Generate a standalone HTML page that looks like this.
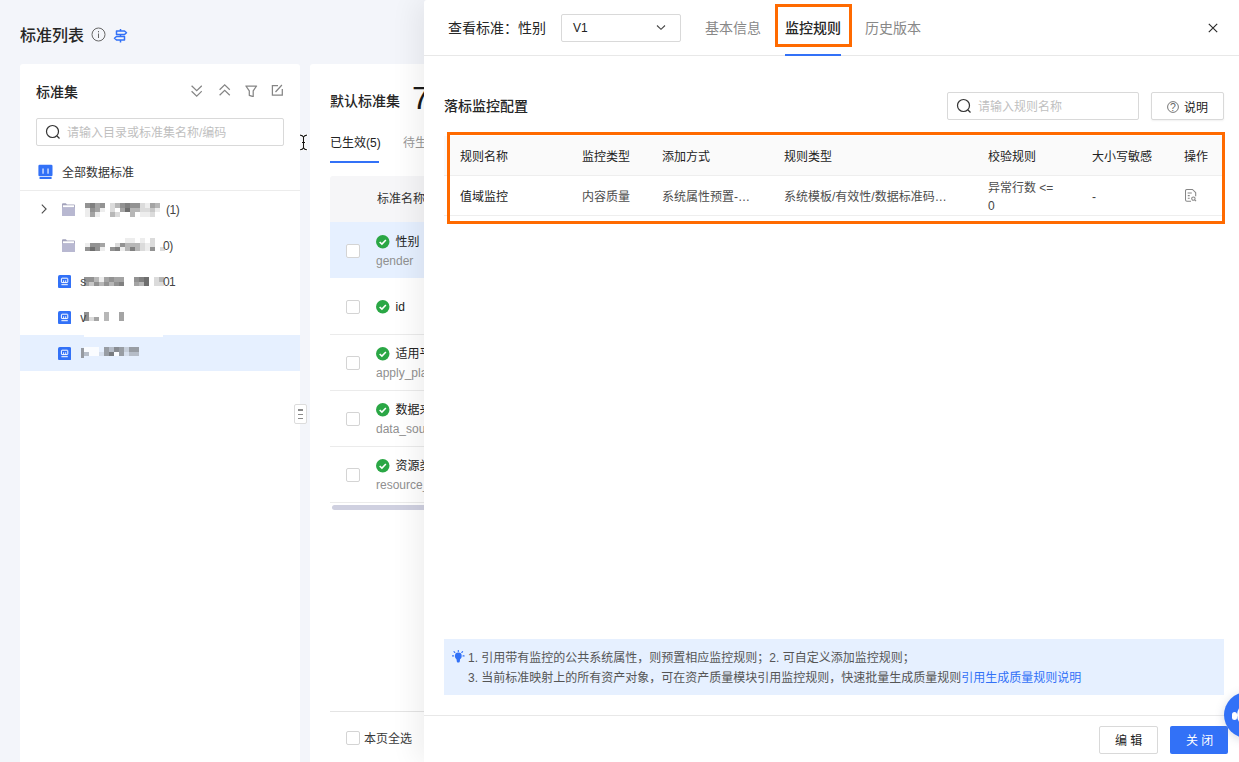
<!DOCTYPE html>
<html lang="zh-CN">
<head>
<meta charset="utf-8">
<title>标准列表</title>
<style>
*{box-sizing:border-box;margin:0;padding:0}
html,body{width:1239px;height:762px;overflow:hidden}
body{font-family:"Liberation Sans","Noto Sans CJK SC",sans-serif;font-size:12px;color:#333;background:#f3f5fa;position:relative}
.abs{position:absolute}
.t{position:absolute;white-space:nowrap;line-height:1}
/* left page */
#title{left:20px;top:27.500px;font-size:16px;font-weight:500;color:#262626}
#tree{left:20px;top:64px;width:280px;height:698px;background:#fff;border-radius:3px 3px 0 0}
#main{left:310px;top:64px;width:200px;height:698px;background:#fff;border-radius:3px 0 0 0}
.search{position:absolute;border:1px solid #d9d9d9;border-radius:2px;background:#fff}
.ph{color:#bfbfbf}
.sel{left:0;top:271px;width:280px;height:36px;background:#e6f0ff}
.blur{position:absolute;background:#9a9a9a;filter:blur(1.2px);opacity:.75}
.cb{position:absolute;width:14px;height:14px;border:1px solid #d4d4d4;border-radius:2px;background:#fff}
.ok{position:absolute;width:13.500px;height:13.500px}
.row-line{position:absolute;left:20px;right:0;height:1px;background:#ebebeb}
/* drawer */
#drawer{left:424px;top:0;width:815px;height:762px;background:#fff;box-shadow:-8px 0 28px rgba(0,0,0,.068);border-radius:3px 0 0 0}
.hl{position:absolute;border:3px solid #ff6a00}
</style>
</head>
<body>

<!-- ===== background page ===== -->
<div class="t" id="title">标准列表</div>
<svg class="abs" style="left:91.200px;top:27.200px" width="15" height="15" viewBox="0 0 15 15"><circle cx="7.500" cy="7.500" r="6.500" fill="none" stroke="#666" stroke-width="1"/><rect x="7" y="6.500" width="1" height="4.500" fill="#666"/><rect x="7" y="4" width="1" height="1.300" fill="#666"/></svg>
<svg class="abs" style="left:113px;top:28px" width="15" height="15" viewBox="0 0 15 15" fill="none" stroke="#3271f7" stroke-width="1.500" stroke-linejoin="round"><path d="M7.500 1v2M7.500 6.500v2M7.500 12v2.500"/><path d="M3.500 3h8l2 1.750-2 1.750h-8z"/><path d="M11.500 8.500h-8l-2 1.750 2 1.750h8z"/></svg>

<div class="abs" id="tree">
  <div class="t" style="left:16px;top:20.500px;font-size:14px;font-weight:500;color:#262626">标准集</div>
  <!-- toolbar icons -->
  <svg class="abs" style="left:170.500px;top:21px" width="11.400" height="12" viewBox="0 0 11.400 12" fill="none" stroke="#858585" stroke-width="1.250"><path d="M.6.800l5.100 4.900 5.100-4.900M.6 6.200l5.100 4.900 5.100-4.900"/></svg>
  <svg class="abs" style="left:199.300px;top:20.300px" width="11.400" height="12" viewBox="0 0 11.400 12" fill="none" stroke="#858585" stroke-width="1.250"><path d="M.6 5.800l5.100-4.900 5.100 4.900M.6 11.200l5.100-4.900 5.100 4.900"/></svg>
  <svg class="abs" style="left:225px;top:20.500px" width="12.500" height="12.500" viewBox="0 0 12.500 12.500" fill="none" stroke="#858585" stroke-width="1.250" stroke-linejoin="round"><path d="M.9 1h10.700l-3.400 4.800v5.900l-3.900-1.300v-4.600z"/></svg>
  <svg class="abs" style="left:251px;top:19.800px" width="12" height="12" viewBox="0 0 12 12" fill="none" stroke="#858585" stroke-width="1.250"><path d="M7 1.500h-5.600v9.600h9.900v-6M4.500 8l6.400-7"/></svg>

  <div class="search" style="left:16px;top:54px;width:248px;height:28px"></div>
  <svg class="abs" style="left:25px;top:60px" width="16" height="16" viewBox="0 0 16 16" fill="none" stroke="#333" stroke-width="1.200"><circle cx="7.500" cy="7.500" r="6"/><path d="M12 12l2.500 2.500"/></svg>
  <div class="t ph" style="left:47px;top:63px">请输入目录或标准集名称/编码</div>

  <!-- all standards -->
  <svg class="abs" style="left:17px;top:100px" width="16" height="16" viewBox="0 0 16 16"><rect x="1.400" y=".7" width="14.100" height="11.500" rx="1.300" fill="#3271f7"/><rect x="5.200" y="4.500" width="1.700" height="5.200" fill="#fff" opacity=".65"/><rect x="10.200" y="4.500" width="1.700" height="5.200" fill="#fff" opacity=".65"/><rect x="2.500" y="12.900" width="12.100" height="2" rx=".5" fill="#3271f7"/></svg>
  <div class="t" style="left:42px;top:103px;color:#333">全部数据标准</div>
  <div class="abs" style="left:0;top:126px;width:280px;height:1px;background:#ececec"></div>

  <!-- folder rows -->
  <svg class="abs" style="left:21px;top:140px" width="6" height="10" viewBox="0 0 6 10" fill="none" stroke="#4d4d4d" stroke-width="1.100"><path d="M.8.700l4.300 4.300-4.300 4.300"/></svg>
  <svg class="abs" style="left:42.300px;top:138.5px" width="13" height="13" viewBox="0 0 13 13"><path d="M0 1.200q0-1 1-1h2.800l1.200 1.300h7q1 0 1 1v9.500q0 1-1 1h-11q-1 0-1-1z" fill="#a3a3bc"/><rect x=".9" y="2.300" width="11.200" height="2.200" fill="#fff"/><rect x="0" y="4.300" width="13" height="8.700" rx="1" fill="#b8b8d1"/></svg>
  <!--m1--><svg class="abs" style="left:65px;top:139px" width="75.0" height="13.8" viewBox="0 0 75.0 13.8" shape-rendering="crispEdges"><rect x="0.0" y="0.0" width="5" height="4.6" fill="#4a4a4a" opacity="0.6"/><rect x="5.0" y="0.0" width="5" height="4.6" fill="#4a4a4a" opacity="0.7"/><rect x="10.0" y="0.0" width="5" height="4.6" fill="#4a4a4a" opacity="0.5"/><rect x="15.0" y="0.0" width="5" height="4.6" fill="#4a4a4a" opacity="0.6"/><rect x="25.0" y="0.0" width="5" height="4.6" fill="#4a4a4a" opacity="0.2"/><rect x="30.0" y="0.0" width="5" height="4.6" fill="#4a4a4a" opacity="0.4"/><rect x="35.0" y="0.0" width="5" height="4.6" fill="#4a4a4a" opacity="0.6"/><rect x="40.0" y="0.0" width="5" height="4.6" fill="#4a4a4a" opacity="0.7"/><rect x="45.0" y="0.0" width="5" height="4.6" fill="#4a4a4a" opacity="0.6"/><rect x="50.0" y="0.0" width="5" height="4.6" fill="#4a4a4a" opacity="0.6"/><rect x="55.0" y="0.0" width="5" height="4.6" fill="#4a4a4a" opacity="0.2"/><rect x="60.0" y="0.0" width="5" height="4.6" fill="#4a4a4a" opacity="0.1"/><rect x="65.0" y="0.0" width="5" height="4.6" fill="#4a4a4a" opacity="0.5"/><rect x="70.0" y="0.0" width="5" height="4.6" fill="#4a4a4a" opacity="0.4"/><rect x="0.0" y="4.6" width="5" height="4.6" fill="#4a4a4a" opacity="0.1"/><rect x="5.0" y="4.6" width="5" height="4.6" fill="#4a4a4a" opacity="0.6"/><rect x="10.0" y="4.6" width="5" height="4.6" fill="#4a4a4a" opacity="0.5"/><rect x="15.0" y="4.6" width="5" height="4.6" fill="#4a4a4a" opacity="0.1"/><rect x="25.0" y="4.6" width="5" height="4.6" fill="#4a4a4a" opacity="0.2"/><rect x="35.0" y="4.6" width="5" height="4.6" fill="#4a4a4a" opacity="0.5"/><rect x="40.0" y="4.6" width="5" height="4.6" fill="#4a4a4a" opacity="0.8"/><rect x="45.0" y="4.6" width="5" height="4.6" fill="#4a4a4a" opacity="0.4"/><rect x="50.0" y="4.6" width="5" height="4.6" fill="#4a4a4a" opacity="0.4"/><rect x="55.0" y="4.6" width="5" height="4.6" fill="#4a4a4a" opacity="0.2"/><rect x="60.0" y="4.6" width="5" height="4.6" fill="#4a4a4a" opacity="0.2"/><rect x="65.0" y="4.6" width="5" height="4.6" fill="#4a4a4a" opacity="0.3"/><rect x="70.0" y="4.6" width="5" height="4.6" fill="#4a4a4a" opacity="0.1"/><rect x="0.0" y="9.2" width="5" height="4.6" fill="#4a4a4a" opacity="0.1"/><rect x="5.0" y="9.2" width="5" height="4.6" fill="#4a4a4a" opacity="0.5"/><rect x="10.0" y="9.2" width="5" height="4.6" fill="#4a4a4a" opacity="0.1"/><rect x="25.0" y="9.2" width="5" height="4.6" fill="#4a4a4a" opacity="0.4"/><rect x="30.0" y="9.2" width="5" height="4.6" fill="#4a4a4a" opacity="0.2"/><rect x="45.0" y="9.2" width="5" height="4.6" fill="#4a4a4a" opacity="0.4"/><rect x="55.0" y="9.2" width="5" height="4.6" fill="#4a4a4a" opacity="0.1"/><rect x="60.0" y="9.2" width="5" height="4.6" fill="#4a4a4a" opacity="0.1"/><rect x="65.0" y="9.2" width="5" height="4.6" fill="#4a4a4a" opacity="0.2"/></svg>
  <div class="t" style="left:146px;top:139.500px;color:#444;letter-spacing:-.4px">(1)</div>

  <svg class="abs" style="left:42.300px;top:174.5px" width="13" height="13" viewBox="0 0 13 13"><path d="M0 1.200q0-1 1-1h2.800l1.200 1.300h7q1 0 1 1v9.500q0 1-1 1h-11q-1 0-1-1z" fill="#a3a3bc"/><rect x=".9" y="2.300" width="11.200" height="2.200" fill="#fff"/><rect x="0" y="4.300" width="13" height="8.700" rx="1" fill="#b8b8d1"/></svg>
  <!--m2--><svg class="abs" style="left:65px;top:173.5px" width="80.0" height="13.8" viewBox="0 0 80.0 13.8" shape-rendering="crispEdges"><rect x="40.0" y="0.0" width="5" height="4.6" fill="#4a4a4a" opacity="0.1"/><rect x="45.0" y="0.0" width="5" height="4.6" fill="#4a4a4a" opacity="0.1"/><rect x="55.0" y="0.0" width="5" height="4.6" fill="#4a4a4a" opacity="0.1"/><rect x="65.0" y="0.0" width="5" height="4.6" fill="#4a4a4a" opacity="0.2"/><rect x="0.0" y="4.6" width="5" height="4.6" fill="#4a4a4a" opacity="0.1"/><rect x="5.0" y="4.6" width="5" height="4.6" fill="#4a4a4a" opacity="0.6"/><rect x="10.0" y="4.6" width="5" height="4.6" fill="#4a4a4a" opacity="0.6"/><rect x="15.0" y="4.6" width="5" height="4.6" fill="#4a4a4a" opacity="0.5"/><rect x="30.0" y="4.6" width="5" height="4.6" fill="#4a4a4a" opacity="0.2"/><rect x="35.0" y="4.6" width="5" height="4.6" fill="#4a4a4a" opacity="0.6"/><rect x="40.0" y="4.6" width="5" height="4.6" fill="#4a4a4a" opacity="0.4"/><rect x="45.0" y="4.6" width="5" height="4.6" fill="#4a4a4a" opacity="0.4"/><rect x="50.0" y="4.6" width="5" height="4.6" fill="#4a4a4a" opacity="0.4"/><rect x="55.0" y="4.6" width="5" height="4.6" fill="#4a4a4a" opacity="0.2"/><rect x="60.0" y="4.6" width="5" height="4.6" fill="#4a4a4a" opacity="0.1"/><rect x="65.0" y="4.6" width="5" height="4.6" fill="#4a4a4a" opacity="0.2"/><rect x="0.0" y="9.2" width="5" height="4.6" fill="#4a4a4a" opacity="0.6"/><rect x="5.0" y="9.2" width="5" height="4.6" fill="#4a4a4a" opacity="0.8"/><rect x="10.0" y="9.2" width="5" height="4.6" fill="#4a4a4a" opacity="0.6"/><rect x="15.0" y="9.2" width="5" height="4.6" fill="#4a4a4a" opacity="0.1"/><rect x="25.0" y="9.2" width="5" height="4.6" fill="#4a4a4a" opacity="0.6"/><rect x="30.0" y="9.2" width="5" height="4.6" fill="#4a4a4a" opacity="0.7"/><rect x="35.0" y="9.2" width="5" height="4.6" fill="#4a4a4a" opacity="0.1"/><rect x="40.0" y="9.2" width="5" height="4.6" fill="#4a4a4a" opacity="0.4"/><rect x="45.0" y="9.2" width="5" height="4.6" fill="#4a4a4a" opacity="0.7"/><rect x="50.0" y="9.2" width="5" height="4.6" fill="#4a4a4a" opacity="0.4"/><rect x="55.0" y="9.2" width="5" height="4.6" fill="#4a4a4a" opacity="0.2"/><rect x="60.0" y="9.2" width="5" height="4.6" fill="#4a4a4a" opacity="0.1"/><rect x="65.0" y="9.2" width="5" height="4.6" fill="#4a4a4a" opacity="0.6"/><rect x="75.0" y="9.2" width="5" height="4.6" fill="#4a4a4a" opacity="0.2"/></svg>
  <div class="t" style="left:143px;top:175.500px;color:#444;letter-spacing:-.4px">0)</div>

  <!-- standard set rows -->
  <svg class="abs" style="left:38.100px;top:210.6px" width="13.2" height="13.4" viewBox="0 0 13.2 13.4"><rect width="13.2" height="13.4" rx="1.800" fill="#3271f7"/><rect x="3.400" y="3.200" width="6.400" height="4.400" rx=".6" fill="none" stroke="#fff" stroke-width="1"/><path d="M5.600 5.300v2.300M7.700 5.300v2.300" stroke="#fff" stroke-width=".9"/><rect x="3.400" y="9.200" width="6.400" height="1" fill="#fff"/></svg>
  <div class="t" style="left:60.300px;top:211.500px;color:#444">s</div>
  <!--m3--><svg class="abs" style="left:64.3px;top:213px" width="80.0" height="9.2" viewBox="0 0 80.0 9.2" shape-rendering="crispEdges"><rect x="0.0" y="0.0" width="5" height="4.6" fill="#4a4a4a" opacity="0.6"/><rect x="5.0" y="0.0" width="5" height="4.6" fill="#4a4a4a" opacity="0.6"/><rect x="10.0" y="0.0" width="5" height="4.6" fill="#4a4a4a" opacity="0.4"/><rect x="15.0" y="0.0" width="5" height="4.6" fill="#4a4a4a" opacity="0.1"/><rect x="20.0" y="0.0" width="5" height="4.6" fill="#4a4a4a" opacity="0.5"/><rect x="25.0" y="0.0" width="5" height="4.6" fill="#4a4a4a" opacity="0.6"/><rect x="30.0" y="0.0" width="5" height="4.6" fill="#4a4a4a" opacity="0.5"/><rect x="35.0" y="0.0" width="5" height="4.6" fill="#4a4a4a" opacity="0.5"/><rect x="50.0" y="0.0" width="5" height="4.6" fill="#4a4a4a" opacity="0.6"/><rect x="55.0" y="0.0" width="5" height="4.6" fill="#4a4a4a" opacity="0.7"/><rect x="60.0" y="0.0" width="5" height="4.6" fill="#4a4a4a" opacity="0.8"/><rect x="70.0" y="0.0" width="5" height="4.6" fill="#4a4a4a" opacity="0.2"/><rect x="75.0" y="0.0" width="5" height="4.6" fill="#4a4a4a" opacity="0.4"/><rect x="0.0" y="4.6" width="5" height="4.6" fill="#4a4a4a" opacity="0.5"/><rect x="5.0" y="4.6" width="5" height="4.6" fill="#4a4a4a" opacity="0.3"/><rect x="10.0" y="4.6" width="5" height="4.6" fill="#4a4a4a" opacity="0.6"/><rect x="15.0" y="4.6" width="5" height="4.6" fill="#4a4a4a" opacity="0.4"/><rect x="20.0" y="4.6" width="5" height="4.6" fill="#4a4a4a" opacity="0.6"/><rect x="25.0" y="4.6" width="5" height="4.6" fill="#4a4a4a" opacity="0.4"/><rect x="30.0" y="4.6" width="5" height="4.6" fill="#4a4a4a" opacity="0.6"/><rect x="35.0" y="4.6" width="5" height="4.6" fill="#4a4a4a" opacity="0.7"/><rect x="50.0" y="4.6" width="5" height="4.6" fill="#4a4a4a" opacity="0.5"/><rect x="55.0" y="4.6" width="5" height="4.6" fill="#4a4a4a" opacity="0.4"/><rect x="60.0" y="4.6" width="5" height="4.6" fill="#4a4a4a" opacity="0.8"/><rect x="70.0" y="4.6" width="5" height="4.6" fill="#4a4a4a" opacity="0.2"/><rect x="75.0" y="4.6" width="5" height="4.6" fill="#4a4a4a" opacity="0.2"/></svg>
  <div class="t" style="left:143px;top:211.500px;color:#444;letter-spacing:-.6px">01</div>

  <svg class="abs" style="left:38.100px;top:246.6px" width="13.2" height="13.4" viewBox="0 0 13.2 13.4"><rect width="13.2" height="13.4" rx="1.800" fill="#3271f7"/><rect x="3.400" y="3.200" width="6.400" height="4.400" rx=".6" fill="none" stroke="#fff" stroke-width="1"/><path d="M5.600 5.300v2.300M7.700 5.300v2.300" stroke="#fff" stroke-width=".9"/><rect x="3.400" y="9.200" width="6.400" height="1" fill="#fff"/></svg>
  <div class="t" style="left:60.300px;top:247.500px;color:#444">v</div>
  <!--m4--><svg class="abs" style="left:64.3px;top:248px" width="40.0" height="9.2" viewBox="0 0 40.0 9.2" shape-rendering="crispEdges"><rect x="0.0" y="0.0" width="5" height="4.6" fill="#4a4a4a" opacity="0.6"/><rect x="20.0" y="0.0" width="5" height="4.6" fill="#4a4a4a" opacity="0.4"/><rect x="35.0" y="0.0" width="5" height="4.6" fill="#4a4a4a" opacity="0.5"/><rect x="0.0" y="4.6" width="5" height="4.6" fill="#4a4a4a" opacity="0.6"/><rect x="5.0" y="4.6" width="5" height="4.6" fill="#4a4a4a" opacity="0.2"/><rect x="10.0" y="4.6" width="5" height="4.6" fill="#4a4a4a" opacity="0.5"/><rect x="20.0" y="4.6" width="5" height="4.6" fill="#4a4a4a" opacity="0.4"/><rect x="35.0" y="4.6" width="5" height="4.6" fill="#4a4a4a" opacity="0.5"/></svg>

  <div class="abs sel"></div>
  <div class="abs" style="left:64px;top:270px;width:79px;height:2.500px;background:#fff"></div>
  <div class="abs" style="left:60.500px;top:284px;width:3.500px;height:10px;background:#555;opacity:.55;filter:blur(.4px)"></div>
  <svg class="abs" style="left:38.100px;top:282.6px" width="13.2" height="13.4" viewBox="0 0 13.2 13.4"><rect width="13.2" height="13.4" rx="1.800" fill="#3271f7"/><rect x="3.400" y="3.200" width="6.400" height="4.400" rx=".6" fill="none" stroke="#fff" stroke-width="1"/><path d="M5.600 5.300v2.300M7.700 5.300v2.300" stroke="#fff" stroke-width=".9"/><rect x="3.400" y="9.200" width="6.400" height="1" fill="#fff"/></svg>
  <!--m5--><svg class="abs" style="left:64.3px;top:283px" width="55.0" height="9.2" viewBox="0 0 55.0 9.2" shape-rendering="crispEdges"><rect x="0.0" y="0.0" width="5" height="4.6" fill="#fff" opacity=".8"/><rect x="5.0" y="0.0" width="5" height="4.6" fill="#fff" opacity=".8"/><rect x="10.0" y="0.0" width="5" height="4.6" fill="#fff" opacity=".8"/><rect x="20.0" y="0.0" width="5" height="4.6" fill="#4a4a4a" opacity="0.5"/><rect x="25.0" y="0.0" width="5" height="4.6" fill="#4a4a4a" opacity="0.3"/><rect x="30.0" y="0.0" width="5" height="4.6" fill="#4a4a4a" opacity="0.6"/><rect x="35.0" y="0.0" width="5" height="4.6" fill="#4a4a4a" opacity="0.5"/><rect x="40.0" y="0.0" width="5" height="4.6" fill="#4a4a4a" opacity="0.2"/><rect x="45.0" y="0.0" width="5" height="4.6" fill="#4a4a4a" opacity="0.5"/><rect x="50.0" y="0.0" width="5" height="4.6" fill="#4a4a4a" opacity="0.5"/><rect x="0.0" y="4.6" width="5" height="4.6" fill="#4a4a4a" opacity="0.3"/><rect x="5.0" y="4.6" width="5" height="4.6" fill="#fff" opacity=".8"/><rect x="10.0" y="4.6" width="5" height="4.6" fill="#fff" opacity=".8"/><rect x="15.0" y="4.6" width="5" height="4.6" fill="#4a4a4a" opacity="0.1"/><rect x="20.0" y="4.6" width="5" height="4.6" fill="#4a4a4a" opacity="0.5"/><rect x="25.0" y="4.6" width="5" height="4.6" fill="#4a4a4a" opacity="0.7"/><rect x="30.0" y="4.6" width="5" height="4.6" fill="#fff" opacity=".8"/><rect x="35.0" y="4.6" width="5" height="4.6" fill="#4a4a4a" opacity="0.5"/><rect x="40.0" y="4.6" width="5" height="4.6" fill="#4a4a4a" opacity="0.1"/><rect x="45.0" y="4.6" width="5" height="4.6" fill="#4a4a4a" opacity="0.3"/><rect x="50.0" y="4.6" width="5" height="4.6" fill="#4a4a4a" opacity="0.3"/></svg>
</div>

<!-- splitter handle + cursor -->
<div class="abs" style="left:294px;top:404px;width:13px;height:20px;background:#fff;border:1px solid #dcdcdc;border-radius:2px"></div>
<div class="abs" style="left:297.500px;top:409.300px;width:5.500px;height:1.400px;background:#8a8a8a"></div>
<div class="abs" style="left:297.500px;top:413.500px;width:5.500px;height:1.400px;background:#8a8a8a"></div>
<div class="abs" style="left:297.500px;top:417.500px;width:5.500px;height:1.400px;background:#8a8a8a"></div>
<svg class="abs" style="left:299px;top:134px" width="9" height="18" viewBox="0 0 9 18" fill="none"><path d="M1.100 1.100q2.600.2 3.400 2 .8-1.800 3.400-2M4.500 3.100v10.600M1.100 15.700q2.600-.2 3.400-2 .8 1.800 3.400 2M3 8.500h3" stroke="#fff" stroke-width="2.800" stroke-linecap="round" opacity=".9"/><path d="M1.100 1.100q2.600.2 3.400 2 .8-1.800 3.400-2M4.500 3.100v10.600M1.100 15.700q2.600-.2 3.400-2 .8 1.800 3.400 2M3 8.500h3" stroke="#111" stroke-width="1.100"/></svg>

<div class="abs" id="main">
  <div class="t" style="left:20px;top:30px;font-size:14px;font-weight:500;color:#262626">默认标准集</div>
  <div class="t" style="left:102px;top:18px;font-size:32px;color:#1a1a1a">7</div>
  <div class="t" style="left:20px;top:73px;font-size:12px;color:#222">已生效(5)</div>
  <div class="t" style="left:93px;top:73px;font-size:12px;color:#999">待生效</div>
  <div class="abs" style="left:20px;top:97px;width:49px;height:2px;background:#3271f7"></div>
  <div class="abs" style="left:20px;top:112px;width:180px;height:46px;background:#f6f6f8;border-radius:3px 0 0 0"></div>
  <div class="t" style="left:67px;top:129px;color:#333">标准名称</div>
  <div class="abs" style="left:20px;top:158px;width:180px;height:56px;background:#e6f0ff"></div>

  <div class="cb" style="left:36px;top:179.5px"></div>
  <svg class="ok" style="left:66px;top:171px" viewBox="0 0 13 13"><circle cx="6.500" cy="6.500" r="6.500" fill="#2aa745"/><path d="M3.500 6.700l2.200 2.100 3.800-4" fill="none" stroke="#fff" stroke-width="1.500"/></svg>
  <div class="t" style="left:85.500px;top:172px;color:#222">性别</div>
  <div class="t" style="left:66px;top:191px;color:#909090">gender</div>

  <div class="cb" style="left:36px;top:235.5px"></div>
  <svg class="ok" style="left:66px;top:236px" viewBox="0 0 13 13"><circle cx="6.500" cy="6.500" r="6.500" fill="#2aa745"/><path d="M3.500 6.700l2.200 2.100 3.800-4" fill="none" stroke="#fff" stroke-width="1.500"/></svg>
  <div class="t" style="left:85.500px;top:237px;color:#222">id</div>
  <div class="row-line" style="top:270px"></div>

  <div class="cb" style="left:36px;top:291.5px"></div>
  <svg class="ok" style="left:66px;top:283px" viewBox="0 0 13 13"><circle cx="6.500" cy="6.500" r="6.500" fill="#2aa745"/><path d="M3.500 6.700l2.200 2.100 3.800-4" fill="none" stroke="#fff" stroke-width="1.500"/></svg>
  <div class="t" style="left:85.500px;top:284px;color:#222">适用平台</div>
  <div class="t" style="left:66px;top:303px;color:#909090">apply_platform</div>
  <div class="row-line" style="top:326px"></div>

  <div class="cb" style="left:36px;top:347.5px"></div>
  <svg class="ok" style="left:66px;top:339px" viewBox="0 0 13 13"><circle cx="6.500" cy="6.500" r="6.500" fill="#2aa745"/><path d="M3.500 6.700l2.200 2.100 3.800-4" fill="none" stroke="#fff" stroke-width="1.500"/></svg>
  <div class="t" style="left:85.500px;top:340px;color:#222">数据来源</div>
  <div class="t" style="left:66px;top:359px;color:#909090">data_source</div>
  <div class="row-line" style="top:382px"></div>

  <div class="cb" style="left:36px;top:403.5px"></div>
  <svg class="ok" style="left:66px;top:395px" viewBox="0 0 13 13"><circle cx="6.500" cy="6.500" r="6.500" fill="#2aa745"/><path d="M3.500 6.700l2.200 2.100 3.800-4" fill="none" stroke="#fff" stroke-width="1.500"/></svg>
  <div class="t" style="left:85.500px;top:396px;color:#222">资源类型</div>
  <div class="t" style="left:66px;top:415px;color:#909090">resource_type</div>
  <div class="row-line" style="top:438px"></div>
  <div class="abs" style="left:22px;top:441px;width:178px;height:5px;background:#cfd0e0;border-radius:3px"></div>

  <div class="abs" style="left:20px;top:647px;width:180px;height:1px;background:#e4e4e4"></div>
  <div class="cb" style="left:36px;top:667px"></div>
  <div class="t" style="left:54px;top:668.600px;color:#3a3a3a">本页全选</div>
</div>

<!-- ===== drawer ===== -->
<div class="abs" id="drawer">
  <div class="t" style="left:24px;top:21px;font-size:14px;color:#262626">查看标准：性别</div>
  <div class="search" style="left:137px;top:14px;width:120px;height:28px"></div>
  <div class="t" style="left:149px;top:22px;font-size:12px;color:#222">V1</div>
  <svg class="abs" style="left:232px;top:24px" width="10" height="7" viewBox="0 0 10 7" fill="none" stroke="#444" stroke-width="1.100"><path d="M1 1.500l4 3.800 4-3.800"/></svg>
  <div class="t" style="left:281px;top:21px;font-size:14px;color:#888">基本信息</div>
  <div class="t" style="left:361px;top:21px;font-size:14px;font-weight:500;color:#262626">监控规则</div>
  <div class="t" style="left:441px;top:21px;font-size:14px;color:#888">历史版本</div>
  <div class="abs" style="left:361px;top:54px;width:56px;height:2px;background:#3271f7;z-index:2"></div>
  <div class="hl" style="left:351px;top:4px;width:77px;height:43px"></div>
  <svg class="abs" style="left:784px;top:23px" width="10" height="10" viewBox="0 0 10 10" fill="none" stroke="#2a2a2a" stroke-width="1.150"><path d="M.8.800l8.400 8.400M9.200.800L.8 9.200"/></svg>
  <div class="abs" style="left:0;top:55px;width:815px;height:1px;background:#e8e8e8"></div>

  <div class="t" style="left:20px;top:99px;font-size:14px;font-weight:500;color:#262626">落标监控配置</div>
  <div class="search" style="left:523px;top:92px;width:192px;height:28px"></div>
  <svg class="abs" style="left:532px;top:98px" width="16" height="16" viewBox="0 0 16 16" fill="none" stroke="#333" stroke-width="1.200"><circle cx="7.500" cy="7.500" r="6"/><path d="M12 12l2.500 2.500"/></svg>
  <div class="t ph" style="left:554px;top:101px">请输入规则名称</div>
  <div class="search" style="left:727px;top:92px;width:73px;height:28px;box-shadow:0 1px 2px rgba(0,0,0,.06)"></div>
  <svg class="abs" style="left:743px;top:100.600px" width="12" height="12" viewBox="0 0 12 12"><circle cx="6" cy="6" r="5.400" fill="none" stroke="#666" stroke-width=".9"/><text x="6" y="9.600" font-size="10.500" text-anchor="middle" fill="#666" font-family="Liberation Sans, sans-serif">?</text></svg>
  <div class="t" style="left:760px;top:101.700px;color:#222">说明</div>

  <!-- table -->
  <div class="abs" style="left:20px;top:136px;width:780px;height:40px;background:#fafafa"></div>
  <div class="abs" style="left:20px;top:175px;width:780px;height:1px;background:#eee"></div>
  <div class="abs" style="left:20px;top:215px;width:780px;height:1px;background:#eee"></div>
  <div class="t" style="left:36px;top:150.5px;color:#222">规则名称</div>
  <div class="t" style="left:158px;top:150.5px;color:#222">监控类型</div>
  <div class="t" style="left:238px;top:150.5px;color:#222">添加方式</div>
  <div class="t" style="left:360px;top:150.5px;color:#222">规则类型</div>
  <div class="t" style="left:564px;top:150.5px;color:#222">校验规则</div>
  <div class="t" style="left:668px;top:150.5px;color:#222">大小写敏感</div>
  <div class="t" style="left:760px;top:150.5px;color:#222">操作</div>

  <div class="t" style="left:36px;top:190.5px;color:#222">值域监控</div>
  <div class="t" style="left:158px;top:190.5px;color:#4d4d4d">内容质量</div>
  <div class="t" style="left:238px;top:190.5px;color:#4d4d4d">系统属性预置-…</div>
  <div class="t" style="left:360px;top:190.5px;color:#4d4d4d">系统模板/有效性/数据标准码…</div>
  <div class="t" style="left:564px;top:181.5px;color:#4d4d4d">异常行数 &lt;=</div>
  <div class="t" style="left:564px;top:199.5px;color:#444">0</div>
  <div class="t" style="left:668px;top:190.5px;color:#444">-</div>
  <svg class="abs" style="left:761px;top:188.500px" width="12" height="13" viewBox="0 0 12 13" fill="none" stroke="#868686" stroke-width="1.050" stroke-linejoin="round"><path d="M10.700 7.200v-3.500l-3.200-3.200h-5.500q-1.500 0-1.500 1.500v8.700q0 1.500 1.500 1.500h4"/><path d="M2.600 4h4.200M2.800 6.600h1.900M2.800 9.200h1.900"/><circle cx="8.400" cy="9.600" r="1.700"/><path d="M9.700 10.900l1.400 1.300"/></svg>
  <div class="hl" style="left:23px;top:132px;width:778px;height:92px"></div>

  <!-- tips -->
  <div class="abs" style="left:20px;top:639px;width:780px;height:56px;background:#e6f0ff"></div>
  <svg class="abs" style="left:28.300px;top:650px" width="13" height="13" viewBox="0 0 13 13"><circle cx="6.300" cy="5.900" r="3.400" fill="#3271f7"/><path d="M4.300 7.500h4l-.5 4q-.1 1-1 1h-1q-.9 0-1-1z" fill="#3271f7"/><path d="M6.300 0.400v1M2 1.700l.8.800M10.600 1.700l-.8.800M0.500 5.900h1.100M11 5.900h1.100" stroke="#3271f7" stroke-width="1.100" stroke-linecap="round"/></svg>
  <div class="t" style="left:44px;top:652px;color:#555">1. 引用带有监控的公共系统属性，则预置相应监控规则；2. 可自定义添加监控规则；</div>
  <div class="t" style="left:44px;top:672px;color:#555">3. 当前标准映射上的所有资产对象，可在资产质量模块引用监控规则，快速批量生成质量规则<span style="color:#3271f7">引用生成质量规则说明</span></div>

  <!-- footer -->
  <div class="abs" style="left:0;top:715px;width:815px;height:1px;background:#e8e8e8"></div>
  <div class="search" style="left:675px;top:726px;width:59px;height:28px;border-radius:2px"></div>
  <div class="t" style="left:691px;top:735px;color:#222">编 辑</div>
  <div class="abs" style="left:746px;top:726px;width:58px;height:28px;background:#3271f7;border-radius:2px"></div>
  <div class="t" style="left:762px;top:735px;color:#fff">关 闭</div>
  <!-- floating help bubble -->
  <div class="abs" style="left:800px;top:692px;width:46px;height:46px;border-radius:23px;background:#3271f7;box-shadow:0 2px 10px rgba(120,130,160,.3)"></div>
  <div class="abs" style="left:812.500px;top:703px;width:20px;height:24px;border-radius:12px 0 0 12px;border:3px solid #fff;border-right:none"></div>
  <div class="abs" style="left:808px;top:712px;width:5px;height:8px;border-radius:2.500px;background:#fff"></div>
</div>

</body>
</html>
